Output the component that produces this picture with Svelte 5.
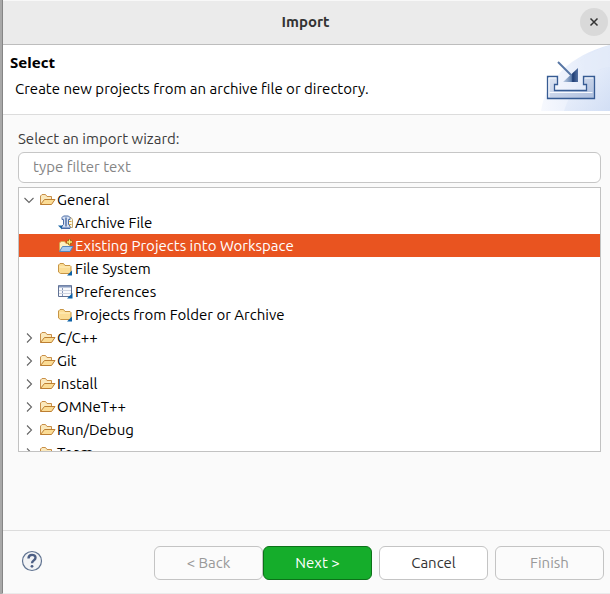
<script>
  const wizards = [
    { name: 'General', level: 1, icon: 'open', expanded: true },
    { name: 'Archive File', level: 2, icon: 'archive' },
    { name: 'Existing Projects into Workspace', level: 2, icon: 'project' },
    { name: 'File System', level: 2, icon: 'folder' },
    { name: 'Preferences', level: 2, icon: 'table' },
    { name: 'Projects from Folder or Archive', level: 2, icon: 'folder' },
    { name: 'C/C++', level: 1, icon: 'open', expanded: false },
    { name: 'Git', level: 1, icon: 'open', expanded: false },
    { name: 'Install', level: 1, icon: 'open', expanded: false },
    { name: 'OMNeT++', level: 1, icon: 'open', expanded: false },
    { name: 'Run/Debug', level: 1, icon: 'open', expanded: false },
    { name: 'Team', level: 1, icon: 'open', expanded: false }
  ];
  let selected = $state('Existing Projects into Workspace');
  let filter = $state('');
</script>

<div class="screen">
  <main class="dialog">
    <header class="titlebar">
      <h1>Import</h1>
      <button class="close" aria-label="Close">
        <svg width="10" height="10" viewBox="0 0 10 10"><path d="M1.5 1.5l7 7M8.500 1.500l-7 7" stroke="#333" stroke-width="1.500" fill="none" /></svg>
      </button>
    </header>

    <section class="banner">
      <div class="intro">
        <h2>Select</h2>
        <p>Create new projects from an archive file or directory.</p>
      </div>
      <svg class="art" width="70" height="69" viewBox="0 0 70 69" aria-hidden="true">
        <defs>
          <linearGradient id="sky" x1="0" y1="0" x2="1" y2="0"><stop offset="0" stop-color="#f7f9fe" /><stop offset="1" stop-color="#dbe5f8" /></linearGradient>
          <linearGradient id="glow" x1="0" y1="0" x2="1" y2="1"><stop offset="0" stop-color="#f1f5fd" /><stop offset="1" stop-color="#d0ddf4" /></linearGradient>
          <linearGradient id="tray" x1="0" y1="0" x2="1" y2="1"><stop offset="0" stop-color="#e0e7f4" /><stop offset="1" stop-color="#adbedd" /></linearGradient>
          <linearGradient id="tip" x1="0" y1="0" x2="1" y2="0"><stop offset="0" stop-color="#c4d2e6" /><stop offset="0.55" stop-color="#6483b0" /><stop offset="0.65" stop-color="#1d3c73" /><stop offset="1" stop-color="#5572a3" /></linearGradient>
        </defs>
        <path d="M1 66C5 36 30 10 70 0V66z" fill="url(#sky)" />
        <path d="M24 66C30 46 46 26 70 22V66z" fill="url(#glow)" opacity=".8" />
        <path d="M40 16Q54 5 70 0V22Q56 24 47 31 46 22 40 16z" fill="#e6edfa" opacity=".7" />
        <path d="M7.500 31.500h10v8h-3v6h32v-6h-3v-8h11v22h-47z" fill="url(#tray)" stroke="#365b93" stroke-width="1.300" />
        <path d="M9 52V33h7M45 33h8M9.500 47.500h43" fill="none" stroke="#f6f9fe" />
        <path d="M18 17l15 15" stroke="#5876a4" stroke-width="2" />
        <path d="M38 23v14H23z" fill="url(#tip)" />
      </svg>
    </section>

    <section class="content">
      <label for="filter">Select an import wizard:</label>
      <input id="filter" type="text" placeholder="type filter text" bind:value={filter} />
      <ul class="tree" role="tree" aria-label="Import wizards">
        {#each wizards as item}
          <li role="treeitem" aria-level={item.level} aria-expanded={item.expanded} aria-selected={selected === item.name}>
            <button class="row" class:child={item.level === 2} class:selected={selected === item.name} onclick={() => (selected = item.name)}>
              {#if item.level === 1}
                <svg class="twist" width="10" height="10" viewBox="0 0 10 10" fill="none" stroke="#666" stroke-width="1.100">
                  <path d={item.expanded ? 'M0.500 3L5 7.500 9.500 3' : 'M3 0.500L7.500 5 3 9.500'} />
                </svg>
              {/if}
              <svg class="icon" width="16" height="16" viewBox="0 0 16 16">
                {#if item.icon === 'open'}
                  <path d="M.500 12.500V4L2 2.500H5.500L7 4.500H11.500V7.500" fill="#fbe9bd" stroke="#c98f48" />
                  <path d="M.500 12.500L4.500 7.500h10.500L11.500 12.500z" fill="#fbdc95" stroke="#bd7f32" />
                {:else if item.icon === 'archive'}
                  <path d="M11 2.500h2l1.500 2v8H9" fill="#fdf8e6" stroke="#c0a872" />
                  <path d="M10.500 6.500h3M10.500 9.500h3" stroke="#d5a743" />
                  <path d="M4 4.500V2.500l1.500-1.500h5L12 2.500v2h-1.500v5L12 11v2.500H4V11l1.500-1.500v-5z" fill="#d6e0f2" stroke="#4b6da6" />
                  <path d="M8 2.500v9" stroke="#4b6da6" stroke-width="1.400" />
                  <path d="M5 12.500h6" stroke="#8ba5d0" />
                  <path d="M0 10.500h4v4z" fill="#1764a4" />
                {:else if item.icon === 'project'}
                  <path d="M1.500 12.500V5L3 3.500h3.500L8 5.500h3.500V8" fill="#fff0c0" stroke="#d9a650" />
                  <path d="M1.500 13.500L4.500 8.500h10.500L12 13.500z" fill="#a9cbef" stroke="#5486bd" />
                  <path d="M11.500 1v6M8.500 4h6" stroke="#87650d" stroke-width="2.600" />
                  <path d="M11.500 1.500v5M9 4h5" stroke="#ffea79" stroke-width="1.300" />
                {:else if item.icon === 'folder'}
                  <path d="M.500 11V4L2 2.500h3.500L7 4.500h5L13 5.500V11l-1.500 1.500h-9z" fill="#fbdc94" stroke="#c79545" />
                  <path d="M1.500 6h10.500" stroke="#fff0c0" />
                  <path d="M14 9.500v5H9z" fill="#0d62a8" />
                {:else}
                  <path d="M.500 1.500h13v11H.500z" fill="#f8f9fc" stroke="#607194" />
                  <path d="M1 2.500h12" stroke="#8497bb" stroke-width="2" />
                  <path d="M4.500 4v8" stroke="#8497bb" />
                  <path d="M1 6.500h12M1 9.500h12" stroke="#cdd3e0" />
                  <path d="M14.500 9v5.500H9z" fill="#0d62a8" />
                {/if}
              </svg>
              <span>{item.name}</span>
            </button>
          </li>
        {/each}
      </ul>
    </section>

    <footer>
      <button class="help" aria-label="Help">
        <svg width="22" height="22" viewBox="0 0 22 22">
          <circle cx="11" cy="11" r="9.500" fill="#f2f3f5" stroke="#5f7290" stroke-width="1.200" />
          <path d="M7.500 8.500C7.500 3.500 14.500 4 14.500 7.700 14.500 10.500 11 10.300 11 13.300" fill="none" stroke="#4c5e84" stroke-width="2.400" />
          <circle cx="11" cy="16.300" r="1.400" fill="#4c5e84" />
        </svg>
      </button>
      <div class="actions">
        <div class="steps">
          <button class="action" disabled>&lt; Back</button>
          <button class="action primary">Next &gt;</button>
        </div>
        <button class="action">Cancel</button>
        <button class="action" disabled>Finish</button>
      </div>
    </footer>
  </main>
</div>

<style>
  .screen {
    box-sizing: border-box;
    min-height: 100vh;
    padding-left: 2px;
    display: flex;
    background: #a8a8a8;
    font: 15px/20px "Ubuntu", "Noto Sans", sans-serif;
    color: #000;
  }
  .dialog {
    flex: 1;
    min-width: 0;
    display: flex;
    flex-direction: column;
    background: #fafafa;
    border-left: 1px solid #858585;
    border-bottom: 1px solid #ebebeb;
  }
  button, input { font: inherit; margin: 0; }
  h1, h2, p { margin: 0; font-size: 15px; line-height: 20px; }
  .titlebar {
    display: grid;
    grid-template-columns: 1fr auto 1fr;
    align-items: center;
    box-sizing: border-box;
    height: 45px;
    padding: 0 2px 1px 0;
    background: #ebebeb;
    border-top: 1px solid #f8f8f8;
    border-bottom: 1px solid #bdbdbd;
    color: #333;
  }
  .titlebar h1 { grid-column: 2; }
  .close {
    justify-self: end;
    display: grid;
    place-items: center;
    width: 28px;
    height: 28px;
    padding: 0;
    border: 0;
    border-radius: 50%;
    background: #d9d9d9;
  }
  .banner {
    display: flex;
    justify-content: space-between;
    background: #fff;
    border-bottom: 1px solid #dcdcdc;
  }
  .intro { padding: 7px 0 0 7px; }
  .intro h2 { font-family: "Noto Sans", sans-serif; }
  .intro p { padding: 7px 0 0 5px; }
  .art { display: block; flex: none; }
  .content {
    display: flex;
    flex-direction: column;
    padding: 14px 9px 20px 15px;
  }
  label { color: #3d3d3d; }
  input {
    box-sizing: border-box;
    width: 100%;
    height: 31px;
    margin: 3px 0 4px;
    padding: 0 14px 2px;
    border: 1px solid #c6c6c6;
    border-radius: 6px;
    background: #fff;
  }
  input::placeholder { color: #858585; opacity: 1; }
  .tree {
    box-sizing: border-box;
    height: 265px;
    margin: 0;
    padding: 0;
    overflow: hidden;
    list-style: none;
    border: 1px solid #c2c2c2;
    background: #fff;
  }
  .row {
    display: flex;
    align-items: center;
    width: 100%;
    height: 23px;
    padding: 0 5px;
    border: 0;
    background: none;
    color: #000;
    text-align: left;
    white-space: nowrap;
  }
  .row.child { padding-left: 39px; }
  .row.selected { background: #e95420; color: #fff; }
  .twist { flex: none; margin-right: 6px; }
  .icon { flex: none; margin-right: 1px; }
  footer {
    display: flex;
    align-items: flex-start;
    justify-content: space-between;
    margin-top: auto;
    padding: 15px 6px 13px 18px;
    border-top: 1px solid #dcdcdc;
  }
  .help { padding: 4px 0; border: 0; background: none; }
  .help svg { display: block; }
  .actions { display: flex; gap: 7px; }
  .steps { display: flex; }
  .action {
    box-sizing: border-box;
    width: 109px;
    height: 34px;
    padding: 0;
    border: 1px solid #c4c4c4;
    border-radius: 6px;
    background: #fff;
    color: #333;
  }
  .action:disabled { background: #fbfbfb; color: #999; }
  .action.primary { background: #15ad2b; border-color: #0c7219; color: #fff; }
</style>
